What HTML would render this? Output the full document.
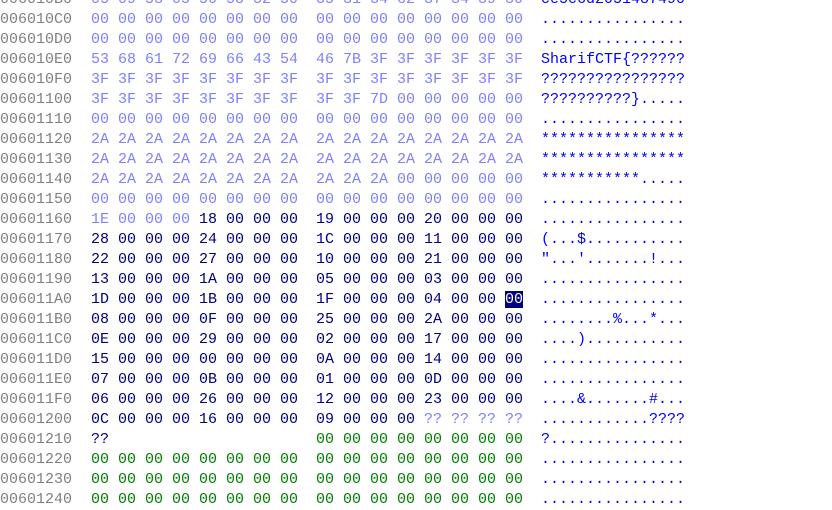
<!DOCTYPE html><html><head><style>
body{margin:0;width:832px;height:508px;background:#fff;overflow:hidden;position:relative;font-family:"Liberation Mono",monospace;font-size:15px}
.r{position:absolute;left:0;height:20px;line-height:20px;white-space:pre;width:832px}
.a{position:absolute;left:0;color:#808080}
.h1{position:absolute;left:91px}
.h2{position:absolute;left:316px}
.s{position:absolute;left:541px;color:#0000ff}
.l{color:#8080ff}.d{color:#000080}.g{color:#008000}
.hl{background:#000080;color:#fff}
</style></head><body>
<div class="r" style="top:-10px"><span class="a">006010B0</span><span class="h1 l">05 09 53 05 50 58 32 50</span><span class="h2 l">35 31 34 62 37 34 39 30</span><span class="s">ce5c6d2051487490</span></div>
<div class="r" style="top:10px"><span class="a">006010C0</span><span class="h1 l">00 00 00 00 00 00 00 00</span><span class="h2 l">00 00 00 00 00 00 00 00</span><span class="s">................</span></div>
<div class="r" style="top:30px"><span class="a">006010D0</span><span class="h1 l">00 00 00 00 00 00 00 00</span><span class="h2 l">00 00 00 00 00 00 00 00</span><span class="s">................</span></div>
<div class="r" style="top:50px"><span class="a">006010E0</span><span class="h1 l">53 68 61 72 69 66 43 54</span><span class="h2 l">46 7B 3F 3F 3F 3F 3F 3F</span><span class="s">SharifCTF{??????</span></div>
<div class="r" style="top:70px"><span class="a">006010F0</span><span class="h1 l">3F 3F 3F 3F 3F 3F 3F 3F</span><span class="h2 l">3F 3F 3F 3F 3F 3F 3F 3F</span><span class="s">????????????????</span></div>
<div class="r" style="top:90px"><span class="a">00601100</span><span class="h1 l">3F 3F 3F 3F 3F 3F 3F 3F</span><span class="h2 l">3F 3F 7D 00 00 00 00 00</span><span class="s">??????????}.....</span></div>
<div class="r" style="top:110px"><span class="a">00601110</span><span class="h1 l">00 00 00 00 00 00 00 00</span><span class="h2 l">00 00 00 00 00 00 00 00</span><span class="s">................</span></div>
<div class="r" style="top:130px"><span class="a">00601120</span><span class="h1 l">2A 2A 2A 2A 2A 2A 2A 2A</span><span class="h2 l">2A 2A 2A 2A 2A 2A 2A 2A</span><span class="s">****************</span></div>
<div class="r" style="top:150px"><span class="a">00601130</span><span class="h1 l">2A 2A 2A 2A 2A 2A 2A 2A</span><span class="h2 l">2A 2A 2A 2A 2A 2A 2A 2A</span><span class="s">****************</span></div>
<div class="r" style="top:170px"><span class="a">00601140</span><span class="h1 l">2A 2A 2A 2A 2A 2A 2A 2A</span><span class="h2 l">2A 2A 2A 00 00 00 00 00</span><span class="s">***********.....</span></div>
<div class="r" style="top:190px"><span class="a">00601150</span><span class="h1 l">00 00 00 00 00 00 00 00</span><span class="h2 l">00 00 00 00 00 00 00 00</span><span class="s">................</span></div>
<div class="r" style="top:210px"><span class="a">00601160</span><span class="h1"><span class="l">1E 00 00 00</span> <span class="d">18 00 00 00</span></span><span class="h2 d">19 00 00 00 20 00 00 00</span><span class="s">................</span></div>
<div class="r" style="top:230px"><span class="a">00601170</span><span class="h1 d">28 00 00 00 24 00 00 00</span><span class="h2 d">1C 00 00 00 11 00 00 00</span><span class="s">(...$...........</span></div>
<div class="r" style="top:250px"><span class="a">00601180</span><span class="h1 d">22 00 00 00 27 00 00 00</span><span class="h2 d">10 00 00 00 21 00 00 00</span><span class="s">"...'.......!...</span></div>
<div class="r" style="top:270px"><span class="a">00601190</span><span class="h1 d">13 00 00 00 1A 00 00 00</span><span class="h2 d">05 00 00 00 03 00 00 00</span><span class="s">................</span></div>
<div class="r" style="top:290px"><span class="a">006011A0</span><span class="h1 d">1D 00 00 00 1B 00 00 00</span><span class="h2 d">1F 00 00 00 04 00 00 <span class="hl">00</span></span><span class="s">................</span></div>
<div class="r" style="top:310px"><span class="a">006011B0</span><span class="h1 d">08 00 00 00 0F 00 00 00</span><span class="h2 d">25 00 00 00 2A 00 00 00</span><span class="s">........%...*...</span></div>
<div class="r" style="top:330px"><span class="a">006011C0</span><span class="h1 d">0E 00 00 00 29 00 00 00</span><span class="h2 d">02 00 00 00 17 00 00 00</span><span class="s">....)...........</span></div>
<div class="r" style="top:350px"><span class="a">006011D0</span><span class="h1 d">15 00 00 00 00 00 00 00</span><span class="h2 d">0A 00 00 00 14 00 00 00</span><span class="s">................</span></div>
<div class="r" style="top:370px"><span class="a">006011E0</span><span class="h1 d">07 00 00 00 0B 00 00 00</span><span class="h2 d">01 00 00 00 0D 00 00 00</span><span class="s">................</span></div>
<div class="r" style="top:390px"><span class="a">006011F0</span><span class="h1 d">06 00 00 00 26 00 00 00</span><span class="h2 d">12 00 00 00 23 00 00 00</span><span class="s">....&amp;.......#...</span></div>
<div class="r" style="top:410px"><span class="a">00601200</span><span class="h1 d">0C 00 00 00 16 00 00 00</span><span class="h2"><span class="d">09 00 00 00</span> <span class="l">?? ?? ?? ??</span></span><span class="s">............????</span></div>
<div class="r" style="top:430px"><span class="a">00601210</span><span class="h1 d">??</span><span class="h2 g">00 00 00 00 00 00 00 00</span><span class="s">?...............</span></div>
<div class="r" style="top:450px"><span class="a">00601220</span><span class="h1 g">00 00 00 00 00 00 00 00</span><span class="h2 g">00 00 00 00 00 00 00 00</span><span class="s">................</span></div>
<div class="r" style="top:470px"><span class="a">00601230</span><span class="h1 g">00 00 00 00 00 00 00 00</span><span class="h2 g">00 00 00 00 00 00 00 00</span><span class="s">................</span></div>
<div class="r" style="top:490px"><span class="a">00601240</span><span class="h1 g">00 00 00 00 00 00 00 00</span><span class="h2 g">00 00 00 00 00 00 00 00</span><span class="s">................</span></div>
</body></html>
